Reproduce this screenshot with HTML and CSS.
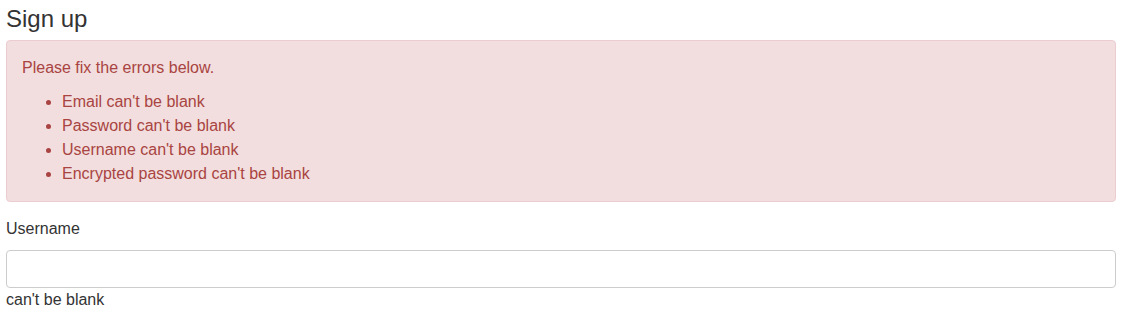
FILE: index.html
```html
<!DOCTYPE html>
<html>
<head>
<meta charset="utf-8">
<title>Sign up</title>
<link rel="stylesheet" href="styles.css">
</head>
<body>
<div class="page">
  <h2 class="title">Sign up</h2>
  <div class="alert">
    <p class="alert-lead">Please fix the errors below.</p>
    <ul class="alert-list">
      <li>Email can't be blank</li>
      <li>Password can't be blank</li>
      <li>Username can't be blank</li>
      <li>Encrypted password can't be blank</li>
    </ul>
  </div>
  <div class="field">
    <label class="field-label" for="username">Username</label>
    <input class="field-input" id="username" type="text">
    <div class="field-error">can't be blank</div>
  </div>
</div>
</body>
</html>
```

FILE: styles.css
```css
html, body {
  margin: 0;
  padding: 0;
  background: #fff;
}
body {
  font-family: "Liberation Sans", Arial, sans-serif;
  font-size: 16px;
  line-height: 24px;
  color: #333;
}
.page {
  width: 1110px;
  margin-left: 6px;
}
.title {
  margin: 5px 0 7px;
  font-size: 24px;
  line-height: 28px;
  font-weight: normal;
  color: #333;
}
.alert {
  background: #f2dede;
  border: 1px solid #ebccd1;
  border-radius: 4px;
  color: #a94442;
  padding: 15px;
  margin-bottom: 15px;
}
.alert-lead {
  margin: 0 0 10px;
}
.alert-list {
  margin: 0;
  padding-left: 40px;
}
.field-label {
  display: block;
  margin-bottom: 9px;
  color: #333;
}
.field-input {
  display: block;
  box-sizing: border-box;
  width: 100%;
  height: 38px;
  margin: 0;
  border: 1px solid #ccc;
  border-radius: 4px;
  background: #fff;
  font: inherit;
  padding: 6px 12px;
}
.field-error {
  color: #333;
}
```
